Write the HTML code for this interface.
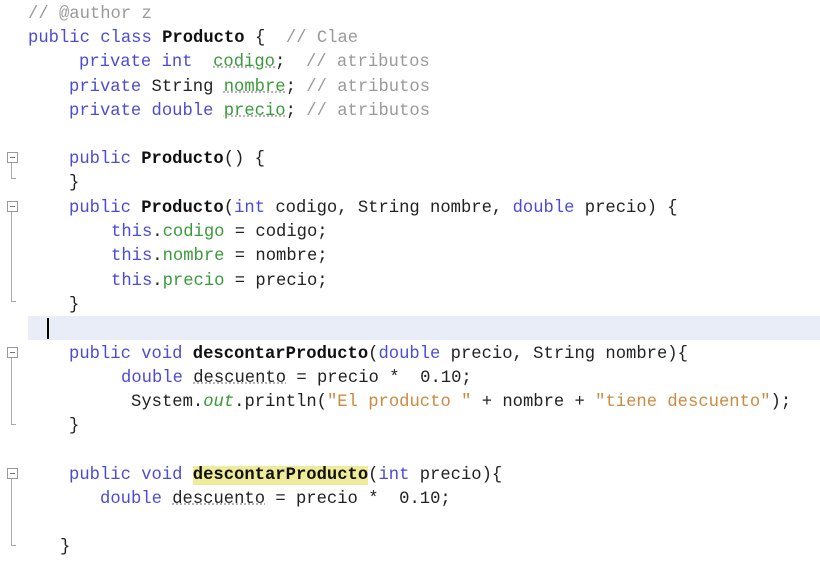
<!DOCTYPE html>
<html><head><style>
body{margin:0;width:820px;height:564px;background:#fff;position:relative;overflow:hidden;font-family:"Liberation Mono",monospace;font-size:17.2px;color:#222}
.l{position:absolute;white-space:pre;line-height:24px;height:24px}
.k{color:#4b4bd6}.f{color:#3a9a3a}.c{color:#9a9a9a}.s{color:#cc8a40}.b{font-weight:bold;color:#111}
.u{text-decoration:underline dotted #aaa}
.fold{position:absolute;left:7px;width:9px;height:9px;border:1px solid #999;background:#fff}
.fold:after{content:"";position:absolute;left:2px;top:4px;width:5px;height:1px;background:#777}
.vl{position:absolute;left:11px;width:1px;background:#aaa}
.hl{position:absolute;left:11px;width:5px;height:1px;background:#aaa}
</style></head><body>
<div style="position:absolute;left:28px;top:316px;width:792px;height:24px;background:#e8edf7"></div>
<div style="position:absolute;left:47px;top:318px;width:2px;height:21px;background:#000"></div>
<div class="l c" style="left:28px;top:3px">// @author z</div>
<div class="l" style="left:28px;top:27px"><span class="k">public class</span> <span class="b">Producto</span> {  <span class="c">// Clae</span></div>
<div class="l" style="left:79px;top:51px"><span class="k">private int</span>  <span class="f u">codigo</span>;  <span class="c">// atributos</span></div>
<div class="l" style="left:69px;top:76px"><span class="k">private</span> String <span class="f u">nombre</span>; <span class="c">// atributos</span></div>
<div class="l" style="left:69px;top:100px"><span class="k">private double</span> <span class="f u">precio</span>; <span class="c">// atributos</span></div>
<div class="l" style="left:69px;top:148px"><span class="k">public</span> <span class="b">Producto</span>() {</div>
<div class="l" style="left:69px;top:172px">}</div>
<div class="l" style="left:69px;top:197px"><span class="k">public</span> <span class="b">Producto</span>(<span class="k">int</span> codigo, String nombre, <span class="k">double</span> precio) {</div>
<div class="l" style="left:111px;top:221px"><span class="k">this</span>.<span class="f">codigo</span> = codigo;</div>
<div class="l" style="left:111px;top:245px"><span class="k">this</span>.<span class="f">nombre</span> = nombre;</div>
<div class="l" style="left:111px;top:270px"><span class="k">this</span>.<span class="f">precio</span> = precio;</div>
<div class="l" style="left:69px;top:294px">}</div>
<div class="l" style="left:69px;top:343px"><span class="k">public void</span> <span class="b">descontarProducto</span>(<span class="k">double</span> precio, String nombre){</div>
<div class="l" style="left:121px;top:367px"><span class="k">double</span> <span class="u">descuento</span> = precio *  0.10;</div>
<div class="l" style="left:131px;top:391px">System.<i class="f">out</i>.println(<span class="s">"El producto "</span> + nombre + <span class="s">"tiene descuento"</span>);</div>
<div class="l" style="left:69px;top:415px">}</div>
<div class="l" style="left:69px;top:464px"><span class="k">public void</span> <span class="b" style="background:#eeeb9a">descontarProducto</span>(<span class="k">int</span> precio){</div>
<div class="l" style="left:100px;top:488px"><span class="k">double</span> <span class="u">descuento</span> = precio *  0.10;</div>
<div class="l" style="left:60px;top:536px">}</div>
<div class="fold" style="top:152px"></div><div class="vl" style="top:163px;height:15px"></div><div class="hl" style="top:178px"></div>
<div class="fold" style="top:201px"></div><div class="vl" style="top:212px;height:89px"></div><div class="hl" style="top:301px"></div>
<div class="fold" style="top:347px"></div><div class="vl" style="top:358px;height:66px"></div><div class="hl" style="top:424px"></div>
<div class="fold" style="top:468px"></div><div class="vl" style="top:479px;height:66px"></div><div class="hl" style="top:545px"></div>
</body></html>
